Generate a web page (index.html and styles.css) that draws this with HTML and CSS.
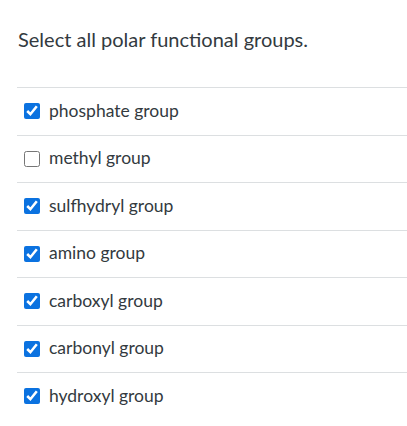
FILE: index.html
```html
<!DOCTYPE html>
<html>
<head>
<meta charset="utf-8">
<link rel="stylesheet" href="styles.css">
</head>
<body>
<div class="question">
  <p class="prompt">Select all polar functional groups.</p>
  <div class="answers">
    <label class="answer"><input type="checkbox" checked><span>phosphate group</span></label>
    <label class="answer"><input type="checkbox"><span>methyl group</span></label>
    <label class="answer"><input type="checkbox" checked><span>sulfhydryl group</span></label>
    <label class="answer"><input type="checkbox" checked><span>amino group</span></label>
    <label class="answer"><input type="checkbox" checked><span>carboxyl group</span></label>
    <label class="answer"><input type="checkbox" checked><span>carbonyl group</span></label>
    <label class="answer"><input type="checkbox" checked><span>hydroxyl group</span></label>
  </div>
</div>
</body>
</html>
```
FILE: styles.css
```css
html, body {
  margin: 0;
  padding: 0;
  background: #ffffff;
}
body {
  font-family: Lato, "Noto Sans", sans-serif;
  color: #333a40;
}
.question {
  padding: 0 0 0 17px;
}
.prompt {
  margin: 0;
  padding: 27px 0 0 1px;
  height: 87px;
  box-sizing: border-box;
  font-size: 20px;
  line-height: 24px;
}
.answers {
  display: flex;
  flex-direction: column;
}
.answer {
  display: flex;
  align-items: center;
  height: 47.5px;
  box-sizing: border-box;
  border-top: 1px solid #dcdfe1;
  padding-left: 7px;
  font-size: 17.5px;
}
.answer span {
  position: relative;
  top: -1px;
}
.answer input {
  width: 16px;
  height: 16px;
  margin: 0 9px 0 0;
  accent-color: #0b72e0;
}
```
